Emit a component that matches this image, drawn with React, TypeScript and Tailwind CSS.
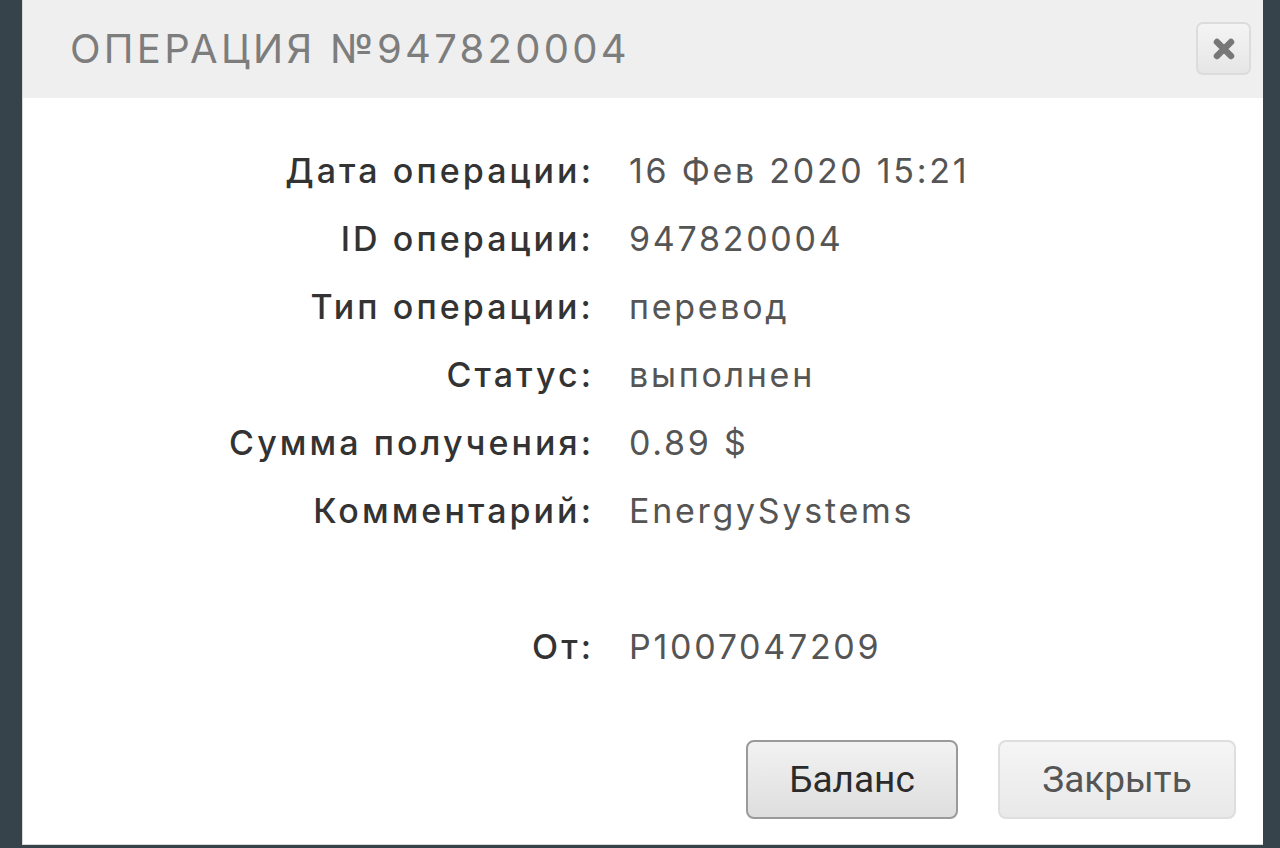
import React from "react";

const rows: [string, string][] = [
  ["Дата операции:", "16 Фев 2020 15:21"],
  ["ID операции:", "947820004"],
  ["Тип операции:", "перевод"],
  ["Статус:", "выполнен"],
  ["Сумма получения:", "0.89 $"],
  ["Комментарий:", "EnergySystems"],
  ["", ""],
  ["От:", "P1007047209"],
];

export default function App() {
  return (
    <div className="w-[1280px] h-[848px] bg-[#36434a] overflow-hidden flex">
      <div className="ml-[22px] w-[1241px] h-[845px] bg-white border-l border-[#d8d8d8] border-b flex flex-col">
        <div className="h-[98px] bg-[#efefef] flex items-center justify-between pl-[47px] pr-[12px] shrink-0">
          <div
            className="text-[40px] text-[#7d7d7d] tracking-[0.082em] leading-none"
            style={{ fontFamily: "Inter, 'Noto Sans', sans-serif" }}
          >
            ОПЕРАЦИЯ №947820004
          </div>
          <div className="w-[55px] h-[53px] rounded-[7px] border-2 border-[#dcdcdc] bg-gradient-to-b from-[#f4f4f4] to-[#e6e6e6] flex items-center justify-center -mt-[1px]">
            <svg width="26" height="26" viewBox="0 0 26 26">
              <path d="M6 6 L20 20 M20 6 L6 20" stroke="#777" strokeWidth="6.5" strokeLinecap="round" />
            </svg>
          </div>
        </div>
        <div
          className="grid grid-cols-[571px_1fr] gap-x-[35px] pt-[38px]"
          style={{ fontFamily: "Inter, 'Noto Sans', sans-serif" }}
        >
          {rows.map(([l, v], i) => (
            <React.Fragment key={i}>
              <div className="h-[68px] flex items-center justify-end text-[34px] font-medium text-[#333] tracking-[0.09em]">
                {l}
              </div>
              <div className="h-[68px] flex items-center text-[34px] text-[#555] tracking-[0.08em]">
                {v}
              </div>
            </React.Fragment>
          ))}
        </div>
        <div
          className="flex justify-end gap-[40px] pr-[27px] mt-[60px]"
          style={{ fontFamily: "Roboto, sans-serif" }}
        >
          <div className="w-[212px] h-[79px] rounded-[8px] border-2 border-[#9a9a9a] bg-gradient-to-b from-[#f2f2f2] to-[#dedede] flex items-center justify-center text-[37px] text-[#2b2b2b]">
            Баланс
          </div>
          <div className="w-[238px] h-[79px] rounded-[8px] border-2 border-[#dedede] bg-gradient-to-b from-[#f5f5f5] to-[#e9e9e9] flex items-center justify-center text-[37px] text-[#555]">
            Закрыть
          </div>
        </div>
      </div>
    </div>
  );
}
